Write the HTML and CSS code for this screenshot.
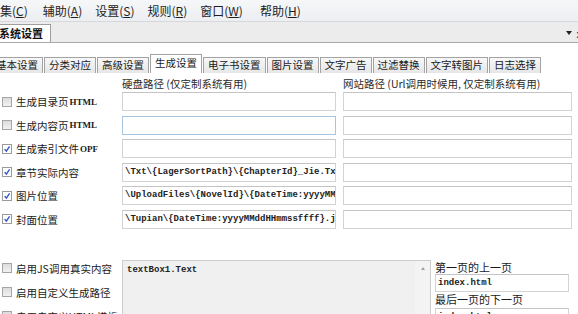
FILE: index.html
```html
<!DOCTYPE html>
<html lang="zh">
<head>
<meta charset="utf-8">
<title>系统设置</title>
<link rel="stylesheet" href="styles.css">
</head>
<body>
<div class="menubar">
  <span class="mi first">集(<u>C</u>)</span>
  <span class="mi">辅助(<u>A</u>)</span>
  <span class="mi">设置(<u>S</u>)</span>
  <span class="mi">规则(<u>R</u>)</span>
  <span class="mi">窗口(<u>W</u>)</span>
  <span class="mi">帮助(<u>H</u>)</span>
</div>
<div class="docbar">
  <div class="doctab">系统设置</div>
  <div class="docctl"><span class="arrow"></span><span class="close">x</span></div>
</div>
<div class="panel">
  <div class="tabs">
    <div class="tab first">基本设置</div>
    <div class="tab">分类对应</div>
    <div class="tab">高级设置</div>
    <div class="tab active">生成设置</div>
    <div class="tab">电子书设置</div>
    <div class="tab">图片设置</div>
    <div class="tab">文字广告</div>
    <div class="tab">过滤替换</div>
    <div class="tab">文字转图片</div>
    <div class="tab">日志选择</div>
  </div>
  <div class="grid heads">
    <div></div>
    <div class="head">硬盘路径 (仅定制系统有用)</div>
    <div class="head">网站路径 (Url调用时候用, 仅定制系统有用)</div>
  </div>
  <div class="grid rows">
    <label class="chk"><span class="box"></span>生成目录页<span class="ser">HTML</span></label>
    <div class="field"></div>
    <div class="field"></div>

    <label class="chk"><span class="box"></span>生成内容页<span class="ser">HTML</span></label>
    <div class="field focus"></div>
    <div class="field"></div>

    <label class="chk"><span class="box on"><svg viewBox="0 0 10 10"><path d="M2 5.2 L4.2 7.6 L8.2 1.8"/></svg></span>生成索引文件<span class="ser">OPF</span></label>
    <div class="field"></div>
    <div class="field"></div>

    <label class="chk"><span class="box on"><svg viewBox="0 0 10 10"><path d="M2 5.2 L4.2 7.6 L8.2 1.8"/></svg></span>章节实际内容</label>
    <div class="field">\Txt\{LagerSortPath}\{ChapterId}_Jie.Txt</div>
    <div class="field"></div>

    <label class="chk"><span class="box on"><svg viewBox="0 0 10 10"><path d="M2 5.2 L4.2 7.6 L8.2 1.8"/></svg></span>图片位置</label>
    <div class="field">\UploadFiles\{NovelId}\{DateTime:yyyyMMdd}\{ImageId}.jpg</div>
    <div class="field"></div>

    <label class="chk"><span class="box on"><svg viewBox="0 0 10 10"><path d="M2 5.2 L4.2 7.6 L8.2 1.8"/></svg></span>封面位置</label>
    <div class="field">\Tupian\{DateTime:yyyyMMddHHmmssffff}.jpg</div>
    <div class="field"></div>
  </div>
  <div class="bottom">
    <div class="opts">
      <label class="chk"><span class="box"></span>启用JS调用真实内容</label>
      <label class="chk"><span class="box"></span>启用自定义生成路径</label>
      <label class="chk"><span class="box"></span>启用自定义HTML模板</label>
    </div>
    <div class="memo">
      <div class="memo-text">textBox1.Text</div>
      <div class="vscroll"><span class="up"></span></div>
    </div>
    <div class="pager">
      <div class="plabel">第一页的上一页</div>
      <div class="field">index.html</div>
      <div class="plabel">最后一页的下一页</div>
      <div class="field">index.html</div>
    </div>
  </div>
</div>
</body>
</html>
```

FILE: styles.css
```css
* { box-sizing: border-box; }
html, body { margin: 0; padding: 0; }
body {
  width: 578px;
  height: 314px;
  overflow: hidden;
  background: #ffffff;
  font-family: "Noto Sans CJK SC", "Microsoft YaHei", sans-serif;
  color: #1e1e1e;
}

/* menu bar */
.menubar {
  height: 22px;
  display: flex;
  align-items: center;
  background: linear-gradient(#f6f7f9, #eceef1);
  border-bottom: 1px solid #d6d8dc;
  font-size: 12px;
  line-height: 14px;
  white-space: nowrap;
}
.mi { padding: 0 6.5px; }
.mi.first { margin-left: -6.5px; }
.mi:nth-child(2) { margin-left: 2px; }
.mi:nth-child(6) { margin-left: 4px; }
.mi u { text-decoration: underline; text-underline-offset: 1px; }

/* document tab bar */
.docbar {
  height: 21px;
  display: flex;
  align-items: flex-end;
  justify-content: space-between;
  background: #ececec;
  border-bottom: 1px solid #a9a9a9;
}
.doctab {
  width: 51px;
  height: 18px;
  background: #ffffff;
  border: 1px solid #9e9e9e;
  border-left: none;
  border-bottom: none;
  font-size: 11px;
  font-weight: 700;
  line-height: 16px;
  text-indent: -1px;
  color: #111;
}
.docctl {
  display: flex;
  align-items: center;
  gap: 5px;
  height: 18px;
  margin-right: -4px;
}
.arrow {
  width: 0; height: 0;
  border-left: 3.5px solid transparent;
  border-right: 3.5px solid transparent;
  border-top: 4px solid #222;
}
.close { font-size: 11px; line-height: 12px; color: #222; }

/* option tabs */
.tabs {
  display: flex;
  align-items: flex-end;
  gap: 1px;
  height: 30px;
  margin-left: -9px;
}
.tab {
  height: 16px;
  padding: 0 4px;
  border: 1px solid #a3a3a3;
  border-bottom: none;
  background: linear-gradient(#f8f8f8, #e6e6e6);
  font-size: 10.5px;
  line-height: 14px;
  white-space: nowrap;
  color: #1a1a1a;
}
.tab.active {
  height: 19px;
  background: #ffffff;
  line-height: 16px;
}

/* grids */
.grid {
  display: grid;
  grid-template-columns: 115px 214px 229px;
  column-gap: 7px;
}
.heads { margin-top: 4px; height: 15px; }
.head { font-size: 10.5px; line-height: 14px; color: #2a2a2a; white-space: nowrap; }
.rows { row-gap: 4.6px; }

.chk {
  display: flex;
  align-items: center;
  height: 19px;
  font-size: 10.5px;
  color: #1a1a1a;
  white-space: nowrap;
}
.box {
  width: 10px;
  height: 10px;
  margin: 0 4px 0 2px;
  border: 1px solid #a5a5a5;
  background: linear-gradient(#dcdcdc, #f2f2f2);
  flex: none;
  display: flex;
}
.box.on { background: #ffffff; border-color: #9a9a9a; }
.box svg { width: 8px; height: 8px; }
.box svg path { fill: none; stroke: #2a55c8; stroke-width: 1.7; }
.ser {
  font-family: "Liberation Serif", serif;
  font-weight: 700;
  font-size: 9px;
  margin-left: 1px;
}

.field {
  height: 19px;
  border: 1px solid #d3d3d3;
  border-top-color: #c4c4c4;
  background: #ffffff;
  font-family: "Liberation Mono", monospace;
  font-weight: 700;
  font-size: 9px;
  line-height: 17px;
  padding-left: 2px;
  white-space: nowrap;
  overflow: hidden;
  color: #222;
}
.field.focus { border-color: #a9c6e0; }

/* bottom area */
.bottom {
  margin-top: 31px;
  display: grid;
  grid-template-columns: 122px 309px 138px;
}
.opts { display: flex; flex-direction: column; gap: 7px; }
.opts .chk { height: 17px; }
.memo {
  height: 70px;
  display: flex;
  background: #f0f0f0;
  border: 1px solid #cdcdcd;
}
.memo-text {
  flex: 1;
  font-family: "Liberation Mono", monospace;
  font-weight: 700;
  font-size: 9px;
  line-height: 12px;
  padding: 3px 4px;
  color: #222;
}
.vscroll {
  width: 15px;
  background: #f3f3f3;
  display: flex;
  justify-content: center;
  padding-top: 6px;
}
.up {
  width: 0; height: 0;
  border-left: 2.5px solid transparent;
  border-right: 2.5px solid transparent;
  border-bottom: 3px solid #a0a0a0;
}
.pager { padding-left: 4px; display: flex; flex-direction: column; }
.plabel { font-size: 11px; line-height: 14px; color: #1a1a1a; white-space: nowrap; }
.pager .field { height: 18px; line-height: 16px; }
.pager .field + .plabel { margin-bottom: 2px; }
```
